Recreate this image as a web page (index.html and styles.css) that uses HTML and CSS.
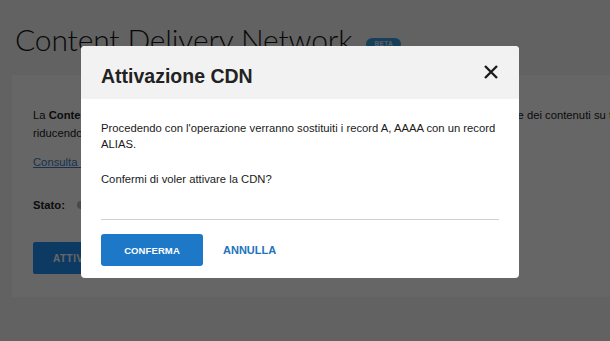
FILE: index.html
```html
<!DOCTYPE html>
<html lang="it">
<head>
<meta charset="utf-8">
<title>Content Delivery Network</title>
<link rel="stylesheet" href="styles.css">
</head>
<body>
<main class="page">
  <div class="page-head">
    <h1 class="page-title">Content Delivery Network</h1>
    <span class="badge">BETA</span>
  </div>
  <section class="card">
    <p class="card-text">La <b>Content Delivery Network</b> (CDN) è una rete che ottimizza le prestazioni web e la distribuzione dei contenuti su tutto il territorio,<br>riducendo i tempi di caricamento delle pagine del sito.</p>
    <a class="card-link" href="#">Consulta la guida</a>
    <div class="status"><b>Stato:</b><span class="status-pill"><span class="dot"></span>Non attiva</span></div>
    <button class="btn-page" type="button">ATTIVA CDN</button>
  </section>
</main>

<div class="overlay">
  <div class="modal" role="dialog">
    <div class="modal-head">
      <h2 class="modal-title">Attivazione CDN</h2>
      <button class="modal-close" type="button" aria-label="Chiudi">
        <svg width="16" height="14" viewBox="0 0 16 14"><path d="M2 1 L14 13 M14 1 L2 13" stroke="#1c1c1c" stroke-width="2.4" stroke-linecap="butt" fill="none"/></svg>
      </button>
    </div>
    <div class="modal-body">
      <p class="modal-p">Procedendo con l'operazione verranno sostituiti i record A, AAAA con un record ALIAS.</p>
      <p class="modal-p">Confermi di voler attivare la CDN?</p>
      <hr class="divider">
      <div class="actions">
        <button class="btn-primary" type="button">CONFERMA</button>
        <button class="btn-link" type="button">ANNULLA</button>
      </div>
    </div>
  </div>
</div>
</body>
</html>
```

FILE: styles.css
```css
html, body {
  margin: 0;
  padding: 0;
  overflow: hidden;
  width: 610px;
  height: 341px;
}
body {
  background: #f5f5f5;
  font-family: "Liberation Sans", Arial, sans-serif;
  color: #222;
}
.page {
  width: 900px;
  padding: 22px 0 0 12px;
}
.page-head {
  display: flex;
  align-items: center;
  gap: 14px;
  padding-left: 3px;
  height: 34px;
}
.page-title {
  margin: 0;
  font-family: Lato, "Noto Sans", sans-serif;
  font-weight: 300;
  font-size: 30px;
  line-height: 34px;
  color: #161616;
  letter-spacing: -0.15px;
}
.badge {
  margin-top: 10px;
  background: #3a9fe0;
  color: #e8f2fa;
  font-size: 6.5px;
  font-weight: 700;
  letter-spacing: 0.4px;
  height: 12px;
  line-height: 12px;
  padding: 0 8px;
  border-radius: 6px;
}
.card {
  margin-top: 19px;
  background: #fff;
  padding: 31px 21px 23px;
  height: 168px;
}
.card-text {
  margin: 0;
  font-size: 11.25px;
  line-height: 18px;
  white-space: nowrap;
}
.card-link {
  display: block;
  margin-top: 11px;
  font-size: 11.25px;
  line-height: 18px;
  color: #3a7cc8;
  text-decoration: underline;
  width: max-content;
}
.status {
  margin-top: 25px;
  display: flex;
  align-items: center;
  gap: 12px;
  font-size: 11.25px;
  line-height: 18px;
}
.status-pill {
  display: flex;
  align-items: center;
  gap: 5px;
  color: #555;
}
.dot {
  width: 8px;
  height: 8px;
  border-radius: 50%;
  background: #b8b8b8;
}
.btn-page {
  margin-top: 28px;
  height: 32px;
  padding: 0 20px;
  border: 0;
  border-radius: 2px;
  background: #2292f5;
  color: #fff;
  font-family: "Liberation Sans", Arial, sans-serif;
  font-size: 10px;
  font-weight: 700;
  letter-spacing: 0.5px;
}
.overlay {
  position: fixed;
  inset: 0;
  background: rgba(0, 0, 0, 0.6);
}
.modal {
  margin: 46px 0 0 81px;
  width: 438px;
  background: #fff;
  border-radius: 4px;
  overflow: hidden;
}
.modal-head {
  height: 53px;
  background: #f2f2f2;
  display: flex;
  align-items: center;
  justify-content: space-between;
  padding: 0 20px;
}
.modal-title {
  margin: 8px 0 0;
  font-size: 19.5px;
  line-height: 23px;
  font-weight: 700;
  color: #222;
}
.modal-close {
  border: 0;
  background: none;
  padding: 0;
  width: 16px;
  height: 14px;
  display: flex;
  margin-top: -1px;
}
.modal-body {
  padding: 21px 20px 12px;
}
.modal-p {
  margin: 0 0 19px;
  font-size: 11.25px;
  line-height: 16px;
  color: #1a1a1a;
}
.modal-p + .modal-p {
  margin-bottom: 0;
}
.divider {
  margin: 32px 0 0;
  border: 0;
  height: 1px;
  background: #d2d2d2;
}
.actions {
  margin-top: 14px;
  display: flex;
  align-items: center;
  gap: 20px;
}
.btn-primary {
  width: 102px;
  height: 32px;
  border: 0;
  border-radius: 3px;
  background: #1e78c8;
  color: #fff;
  font-family: "Liberation Sans", Arial, sans-serif;
  font-size: 9.5px;
  font-weight: 700;
  letter-spacing: 0.1px;
}
.btn-link {
  border: 0;
  background: none;
  padding: 0;
  color: #2372bb;
  font-family: "Liberation Sans", Arial, sans-serif;
  font-size: 11px;
  font-weight: 700;
}
```
